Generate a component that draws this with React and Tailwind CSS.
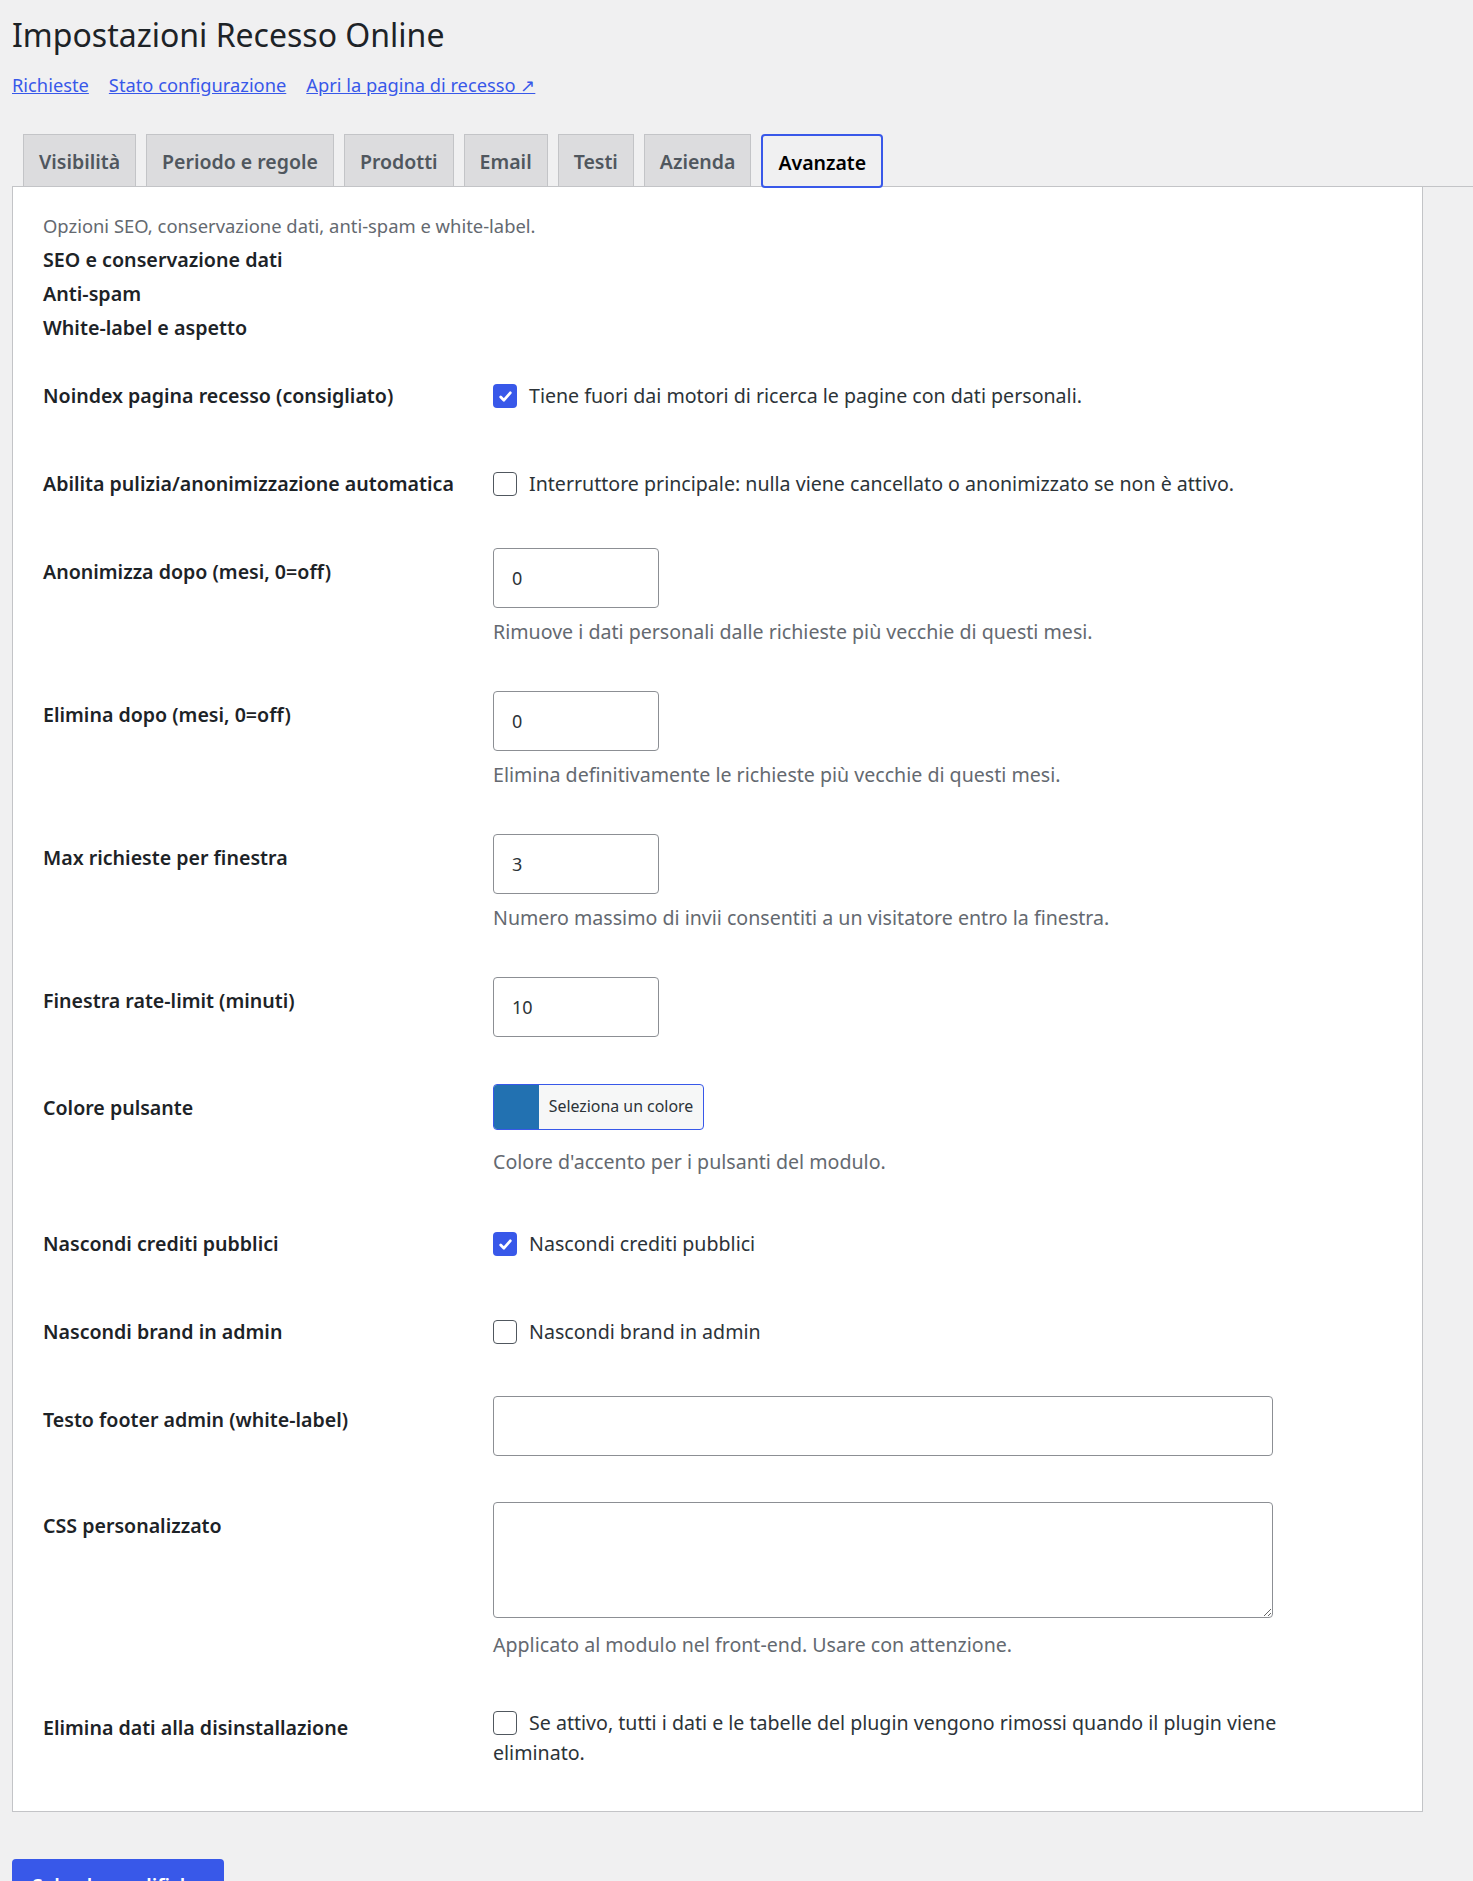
import React from 'react';

const tabs = ['Visibilità', 'Periodo e regole', 'Prodotti', 'Email', 'Testi', 'Azienda', 'Avanzate'];

function Checkbox({ checked }) {
    if (checked) {
        return (
            <span className="flex h-[24px] w-[24px] shrink-0 items-center justify-center rounded-[4px] bg-[#3858e9]">
                <svg viewBox="0 0 16 16" className="h-[17px] w-[17px]" fill="none" stroke="white" strokeWidth="2.6" strokeLinecap="round" strokeLinejoin="round">
                    <path d="M3.5 8.5l3 3 6-7" />
                </svg>
            </span>
        );
    }
    return <span className="block h-[24px] w-[24px] shrink-0 rounded-[4px] border border-[#50575e] bg-white"></span>;
}

function Row({ label, children }) {
    return (
        <div className="flex py-[20px]">
            <div className="w-[450px] shrink-0 pt-[12px] text-[19.6px] font-semibold leading-[24px] text-[#1d2327]">{label}</div>
            <div className="flex-1">{children}</div>
        </div>
    );
}

function CheckRow({ label, text, checked }) {
    return (
        <Row label={label}>
            <div className="flex items-start gap-[12px] py-[12px] text-[19.6px] leading-[24px] text-[#2c3338]">
                <Checkbox checked={checked} />
                <span>{text}</span>
            </div>
        </Row>
    );
}

function NumberRow({ label, value, desc }) {
    return (
        <Row label={label}>
            <div className="pb-[7px]">
                <div className="flex h-[60px] w-[166px] items-center rounded-[4px] border border-[#8c8f94] bg-white pl-[18px] text-[18px] text-[#2c3338]">{value}</div>
                {desc && <p className="mt-[12px] text-[19.6px] leading-[24px] text-[#646970]">{desc}</p>}
            </div>
        </Row>
    );
}

export default function App() {
    return (
        <div className="min-h-screen bg-[#f0f0f1] pl-[12px] font-['Noto_Sans',sans-serif] text-[#1d2327]">
            <h1 className="pt-[18px] text-[32px] font-normal leading-[34px]">Impostazioni Recesso Online</h1>
            <div className="mt-[21px] flex gap-[20px] text-[18.3px] leading-[24px] text-[#3858e9]">
                <a className="underline" href="#">Richieste</a>
                <a className="underline" href="#">Stato configurazione</a>
                <a className="underline" href="#">Apri la pagina di recesso ↗</a>
            </div>

            {/* tabs */}
            <div className="mt-[37px] flex gap-[10px] border-b border-[#c3c4c7] pl-[11px]">
                {tabs.map((t) =>
                    t === 'Avanzate' ? (
                        <div key={t} className="-mb-[2px] flex h-[54px] items-center rounded-[4px] border-2 border-[#3858e9] bg-[#f0f0f1] px-[15px] pt-[3px] text-[19.5px] font-semibold text-black">
                            {t}
                        </div>
                    ) : (
                        <div key={t} className="-mb-px flex h-[52px] items-center border border-b-0 border-[#c3c4c7] bg-[#dcdcde] px-[15px] pt-[3px] text-[19.5px] font-semibold text-[#50575e]">
                            {t}
                        </div>
                    )
                )}
            </div>

            {/* pannello */}
            <div className="mr-[50px] border border-t-0 border-[#c3c4c7] bg-white px-[30px] pb-[43px] pt-[29px]">
                <p className="text-[18.4px] leading-[20px] text-[#646970]">Opzioni SEO, conservazione dati, anti-spam e white-label.</p>
                <div className="mt-[7px] text-[19.7px] font-semibold leading-[34px]">
                    <div>SEO e conservazione dati</div>
                    <div>Anti-spam</div>
                    <div>White-label e aspetto</div>
                </div>

                <div className="mt-[7px]">
                    <CheckRow label="Noindex pagina recesso (consigliato)" text="Tiene fuori dai motori di ricerca le pagine con dati personali." checked />
                    <CheckRow label="Abilita pulizia/anonimizzazione automatica" text="Interruttore principale: nulla viene cancellato o anonimizzato se non è attivo." />
                    <NumberRow label="Anonimizza dopo (mesi, 0=off)" value="0" desc="Rimuove i dati personali dalle richieste più vecchie di questi mesi." />
                    <NumberRow label="Elimina dopo (mesi, 0=off)" value="0" desc="Elimina definitivamente le richieste più vecchie di questi mesi." />
                    <NumberRow label="Max richieste per finestra" value="3" desc="Numero massimo di invii consentiti a un visitatore entro la finestra." />
                    <NumberRow label="Finestra rate-limit (minuti)" value="10" />

                    <Row label="Colore pulsante">
                        <div className="pb-[6px]">
                            <div className="flex h-[46px] w-[211px] overflow-hidden rounded-[4px] border border-[#3858e9] bg-[#f6f7f7]">
                                <span className="w-[45px] bg-[#2271b1]"></span>
                                <span className="flex flex-1 items-center justify-center text-[15.9px] text-[#2c3338]">Seleziona un colore</span>
                            </div>
                            <p className="mt-[20px] text-[19.6px] leading-[24px] text-[#646970]">Colore d'accento per i pulsanti del modulo.</p>
                        </div>
                    </Row>

                    <CheckRow label="Nascondi crediti pubblici" text="Nascondi crediti pubblici" checked />
                    <CheckRow label="Nascondi brand in admin" text="Nascondi brand in admin" />

                    <Row label="Testo footer admin (white-label)">
                        <div className="pb-[6px]">
                            <div className="h-[60px] w-[780px] rounded-[4px] border border-[#8c8f94] bg-white"></div>
                        </div>
                    </Row>

                    <Row label="CSS personalizzato">
                        <div className="pb-[6px]">
                            <textarea className="block h-[116px] w-[780px] rounded-[4px] border border-[#8c8f94] bg-white" readOnly></textarea>
                            <p className="mt-[15px] text-[19.6px] leading-[24px] text-[#646970]">Applicato al modulo nel front-end. Usare con attenzione.</p>
                        </div>
                    </Row>

                    <div className="flex pt-[20px]">
                        <div className="w-[450px] shrink-0 pt-[13px] text-[19.6px] font-semibold leading-[24px]">Elimina dati alla disinstallazione</div>
                        <div className="max-w-[800px] flex-1 pt-[5px] text-[19.6px] leading-[30px] text-[#2c3338]">
                            <span className="mr-[12px] inline-block align-[-5px]">
                                <Checkbox />
                            </span>
                            Se attivo, tutti i dati e le tabelle del plugin vengono rimossi quando il plugin viene eliminato.
                        </div>
                    </div>
                </div>
            </div>

            <button type="button" className="mt-[47px] h-[54px] rounded-[4px] bg-[#3858e9] px-[20px] text-[19.5px] font-semibold text-white">
                Salva le modifiche
            </button>
        </div>
    );
}
